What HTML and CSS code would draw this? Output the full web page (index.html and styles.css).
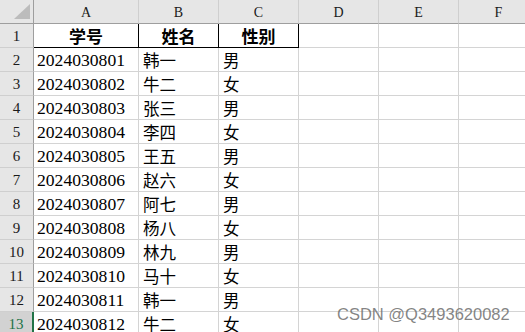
FILE: index.html
```html
<!DOCTYPE html>
<html lang="zh">
<head>
<meta charset="utf-8">
<link rel="stylesheet" href="styles.css">
</head>
<body>
<div class="sheet">
  <div class="grid">
    <div class="corner"><svg width="16" height="15" viewBox="0 0 16 15"><polygon points="16,0 16,15 0,15" fill="#bcbcbc"/></svg></div>
    <div class="colhdr">A</div><div class="colhdr">B</div><div class="colhdr">C</div><div class="colhdr">D</div><div class="colhdr">E</div><div class="colhdr">F</div>

    <div class="rowhdr">1</div><div class="cell th">学号</div><div class="cell th">姓名</div><div class="cell th">性别</div><div class="cell"></div><div class="cell"></div><div class="cell"></div>
    <div class="rowhdr">2</div><div class="cell num">2024030801</div><div class="cell zh">韩一</div><div class="cell zh">男</div><div class="cell"></div><div class="cell"></div><div class="cell"></div>
    <div class="rowhdr">3</div><div class="cell num">2024030802</div><div class="cell zh">牛二</div><div class="cell zh">女</div><div class="cell"></div><div class="cell"></div><div class="cell"></div>
    <div class="rowhdr">4</div><div class="cell num">2024030803</div><div class="cell zh">张三</div><div class="cell zh">男</div><div class="cell"></div><div class="cell"></div><div class="cell"></div>
    <div class="rowhdr">5</div><div class="cell num">2024030804</div><div class="cell zh">李四</div><div class="cell zh">女</div><div class="cell"></div><div class="cell"></div><div class="cell"></div>
    <div class="rowhdr">6</div><div class="cell num">2024030805</div><div class="cell zh">王五</div><div class="cell zh">男</div><div class="cell"></div><div class="cell"></div><div class="cell"></div>
    <div class="rowhdr">7</div><div class="cell num">2024030806</div><div class="cell zh">赵六</div><div class="cell zh">女</div><div class="cell"></div><div class="cell"></div><div class="cell"></div>
    <div class="rowhdr">8</div><div class="cell num">2024030807</div><div class="cell zh">阿七</div><div class="cell zh">男</div><div class="cell"></div><div class="cell"></div><div class="cell"></div>
    <div class="rowhdr">9</div><div class="cell num">2024030808</div><div class="cell zh">杨八</div><div class="cell zh">女</div><div class="cell"></div><div class="cell"></div><div class="cell"></div>
    <div class="rowhdr">10</div><div class="cell num">2024030809</div><div class="cell zh">林九</div><div class="cell zh">男</div><div class="cell"></div><div class="cell"></div><div class="cell"></div>
    <div class="rowhdr">11</div><div class="cell num">2024030810</div><div class="cell zh">马十</div><div class="cell zh">女</div><div class="cell"></div><div class="cell"></div><div class="cell"></div>
    <div class="rowhdr">12</div><div class="cell num">2024030811</div><div class="cell zh">韩一</div><div class="cell zh">男</div><div class="cell"></div><div class="cell"></div><div class="cell"></div>
    <div class="rowhdr active">13</div><div class="cell num">2024030812</div><div class="cell zh">牛二</div><div class="cell zh">女</div><div class="cell"></div><div class="cell"></div><div class="cell"></div>
  </div>
  <div class="watermark">CSDN @Q3493620082</div>
</div>
</body>
</html>
```
FILE: styles.css
```css
html, body {
  margin: 0;
  padding: 0;
  background: #ffffff;
  overflow: hidden;
}
.sheet {
  position: relative;
  width: 525px;
  height: 332px;
  overflow: hidden;
}
.grid {
  display: grid;
  grid-template-columns: 34px 105px 80px 80px 80px 80px 80px;
  grid-auto-rows: 24px;
  width: 539px;
}
.grid > div {
  box-sizing: border-box;
  border-right: 1px solid #d4d4d4;
  border-bottom: 1px solid #d4d4d4;
  overflow: hidden;
  white-space: nowrap;
}
.grid > .corner {
  background: #e6e6e6;
  border-right: 1px solid #9e9e9e;
  border-bottom: 1px solid #9e9e9e;
  display: flex;
  align-items: flex-end;
  justify-content: flex-end;
  padding: 0 3px 4px 0;
}
.corner svg { display: block; }
.grid > .colhdr {
  background: #e6e6e6;
  border-right: 1px solid #cfcfcf;
  border-bottom: 1px solid #9e9e9e;
  font-family: "Liberation Serif", serif;
  font-size: 14px;
  color: #1a1a1a;
  display: flex;
  align-items: center;
  justify-content: center;
  padding-top: 2px;
}
.grid > .rowhdr {
  background: #e6e6e6;
  border-right: 1px solid #9e9e9e;
  border-bottom: 1px solid #cfcfcf;
  font-family: "Liberation Serif", serif;
  font-size: 15px;
  color: #1a1a1a;
  display: flex;
  align-items: center;
  justify-content: center;
  padding-top: 1px;
}
.grid > .rowhdr.active {
  background: #d2d2d2;
  color: #217346;
  border-right: 2px solid #217346;
}
.cell {
  display: flex;
  align-items: center;
  padding-left: 3px;
  color: #000;
}
.grid > .th {
  border-right: 1px solid #000;
  border-bottom: 1px solid #000;
  justify-content: center;
  padding-left: 0;
  font-family: "Noto Sans CJK SC", sans-serif;
  font-weight: 700;
  font-size: 17px;
}
.num {
  font-family: "Liberation Serif", serif;
  font-size: 17.6px;
  padding-top: 2px;
}
.zh {
  font-family: "Noto Sans CJK SC", sans-serif;
  font-size: 16.5px;
  padding-left: 4px;
}
.watermark {
  position: absolute;
  left: 337px;
  top: 306px;
  font-family: "Liberation Sans", sans-serif;
  font-size: 16.5px;
  line-height: 16px;
  color: rgba(110, 110, 110, 0.85);
  white-space: nowrap;
}
```
